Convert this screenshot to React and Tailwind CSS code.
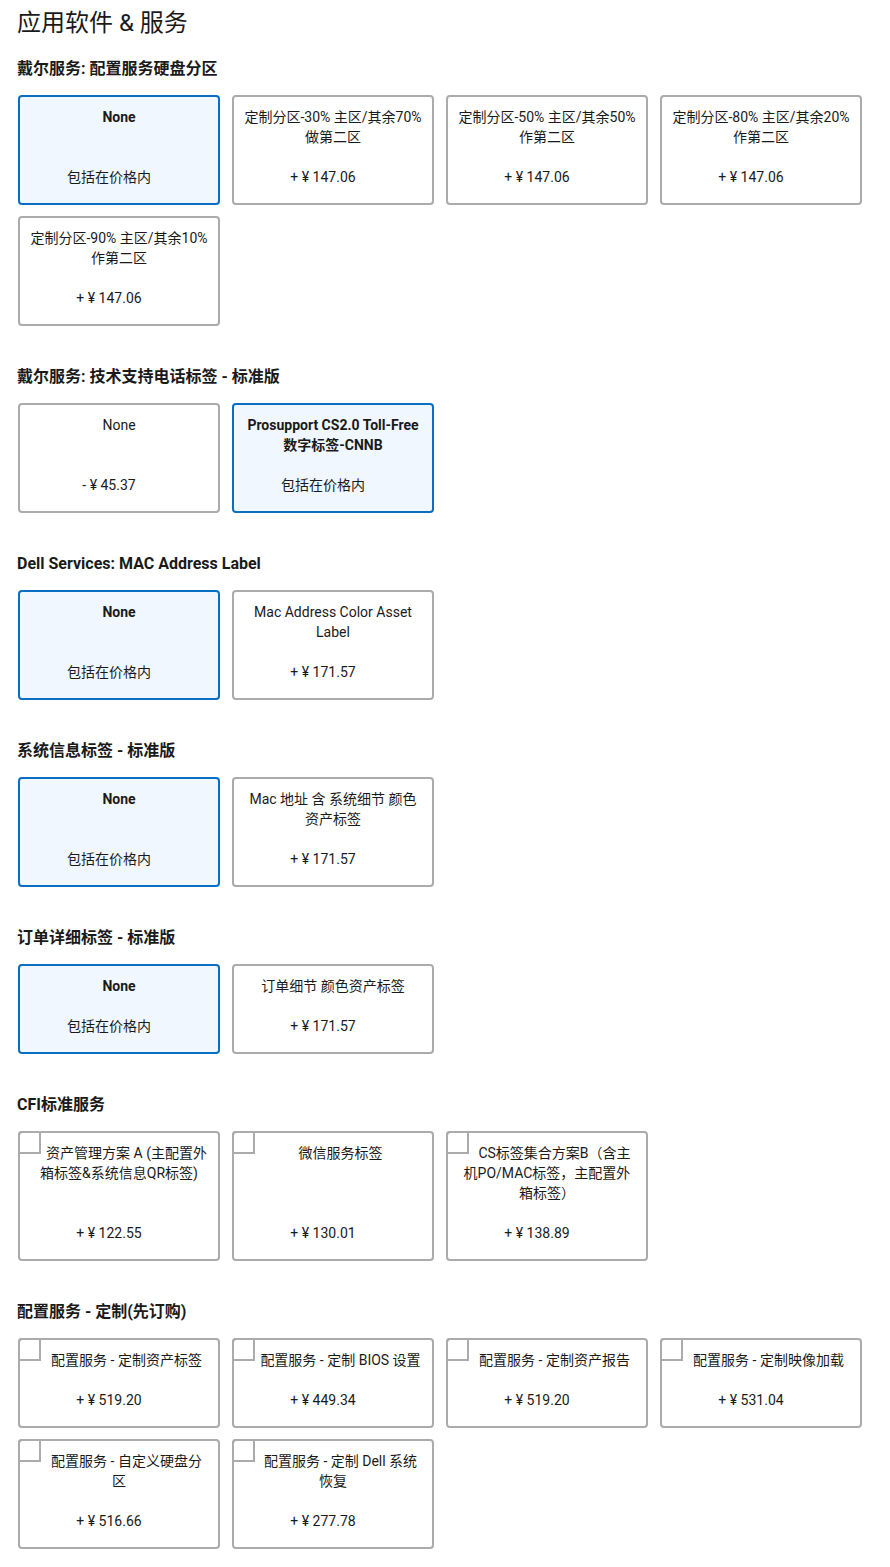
const sections = [
  {
    title: "戴尔服务: 配置服务硬盘分区",
    options: [
      { name: "None", price: "包括在价格内", selected: true },
      { name: "定制分区-30% 主区/其余70% 做第二区", price: "+ ¥ 147.06" },
      { name: "定制分区-50% 主区/其余50% 作第二区", price: "+ ¥ 147.06" },
      { name: "定制分区-80% 主区/其余20% 作第二区", price: "+ ¥ 147.06" },
      { name: "定制分区-90% 主区/其余10% 作第二区", price: "+ ¥ 147.06" },
    ],
  },
  {
    title: "戴尔服务: 技术支持电话标签 - 标准版",
    options: [
      { name: "None", price: "- ¥ 45.37" },
      { name: "Prosupport CS2.0 Toll-Free 数字标签-CNNB", price: "包括在价格内", selected: true },
    ],
  },
  {
    title: "Dell Services: MAC Address Label",
    options: [
      { name: "None", price: "包括在价格内", selected: true },
      { name: "Mac Address Color Asset Label", price: "+ ¥ 171.57" },
    ],
  },
  {
    title: "系统信息标签 - 标准版",
    options: [
      { name: "None", price: "包括在价格内", selected: true },
      { name: "Mac 地址 含 系统细节 颜色资产标签", price: "+ ¥ 171.57" },
    ],
  },
  {
    title: "订单详细标签 - 标准版",
    options: [
      { name: "None", price: "包括在价格内", selected: true },
      { name: "订单细节 颜色资产标签", price: "+ ¥ 171.57" },
    ],
  },
  {
    title: "CFI标准服务",
    checkbox: true,
    options: [
      { name: "资产管理方案 A (主配置外箱标签&系统信息QR标签)", price: "+ ¥ 122.55" },
      { name: "微信服务标签", price: "+ ¥ 130.01" },
      { name: "CS标签集合方案B（含主机PO/MAC标签，主配置外箱标签）", price: "+ ¥ 138.89" },
    ],
  },
  {
    title: "配置服务 - 定制(先订购)",
    checkbox: true,
    options: [
      { name: "配置服务 - 定制资产标签", price: "+ ¥ 519.20" },
      { name: "配置服务 - 定制 BIOS 设置", price: "+ ¥ 449.34" },
      { name: "配置服务 - 定制资产报告", price: "+ ¥ 519.20" },
      { name: "配置服务 - 定制映像加载", price: "+ ¥ 531.04" },
      { name: "配置服务 - 自定义硬盘分区", price: "+ ¥ 516.66" },
      { name: "配置服务 - 定制 Dell 系统恢复", price: "+ ¥ 277.78" },
    ],
  },
];

function OptionCard({ option, checkbox }) {
  const sel = option.selected;
  return (
    <div
      className={`relative w-[202px] flex flex-col rounded-[4px] border-2 px-[10px] pt-[10px] pb-[16px] text-center text-sm leading-5 ${
        sel ? "border-[#0a6fc2] bg-[#f0f7fe]" : "border-[#ababab] bg-white"
      }`}
    >
      {checkbox && (
        <div className="absolute -left-[2px] -top-[2px] w-[23px] h-[23px] border-2 border-[#ababab] rounded-tl-[4px]" />
      )}
      <div className={`${sel ? "font-bold" : ""} text-[#1a1a1a]`}>
        {checkbox && <span className="float-left w-[15px] h-5" />}
        {option.name}
      </div>
      <div className="mt-auto pt-5 pr-5 text-[#1a1a1a]">{option.price}</div>
    </div>
  );
}

export default function App() {
  return (
    <div
      className="bg-white text-[#1a1a1a] pl-[17px] pt-[7px] pb-4"
      style={{ fontFamily: 'Roboto, "Noto Sans CJK SC", sans-serif' }}
    >
      <h1 className="text-2xl leading-8 text-[#1a1a1a]">应用软件 &amp; 服务</h1>
      <div className="mt-[18px] space-y-[39px]">
        {sections.map((s) => (
          <div key={s.title}>
            <h2 className="text-base font-bold leading-6 mb-[14px]">{s.title}</h2>
            <div className="flex flex-wrap gap-x-3 gap-y-[11px] pl-[1px] w-[860px]">
              {s.options.map((o) => (
                <OptionCard key={o.name} option={o} checkbox={s.checkbox} />
              ))}
            </div>
          </div>
        ))}
      </div>
    </div>
  );
}
